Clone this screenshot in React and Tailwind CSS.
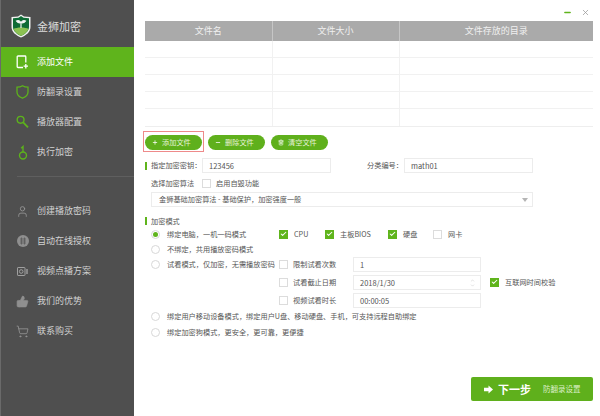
import React from "react";
import { User, ThumbsUp, ShoppingCart, Plus, Minus, Trash2, X, Check, ChevronDown } from "lucide-react";

const FONT = { fontFamily: '"Noto Sans CJK SC", "Noto Sans", sans-serif' };

function Logo() {
  return (
    <svg width="20" height="24" viewBox="0 0 20 24">
      <path d="M10 0.5 L13 2.5 L19.5 3 V13 C19.5 18 15 21.5 10 23.5 C5 21.5 0.5 18 0.5 13 V3 L7 2.5 Z" fill="#f2f2f2" />
      <path d="M10 2 L12.5 3.8 L18 4.2 V13 C18 17 14 20.3 10 22 C6 20.3 2 17 2 13 V4.2 L7.5 3.8 Z" fill="#0f6b35" />
      <path d="M2.3 15 C6 13 14 13 17.7 15 C16 18.5 13 20.6 10 22 C7 20.6 4 18.5 2.3 15 Z" fill="#8cc152" />
      <path d="M10 14 V8.5 M10 8.5 C8.5 6.5 6.5 6.5 5.5 7 C6.5 8.8 8.5 9 10 8.5 Z M10 8.5 C11.5 6.5 13.5 6.5 14.5 7 C13.5 8.8 11.5 9 10 8.5 Z" stroke="#f4f4f4" strokeWidth="1.2" fill="#f4f4f4" />
    </svg>
  );
}

const icons = {
  file: (
    <svg width="14" height="14" viewBox="0 0 14 14" fill="none" stroke="#fff" strokeWidth="1.3">
      <path d="M7 12.5 H2 A0.8 0.8 0 0 1 1.2 11.7 V1.8 A0.8 0.8 0 0 1 2 1 H9 A0.8 0.8 0 0 1 9.8 1.8 V7.5" />
      <path d="M9.8 9 V13.4 M7.6 11.2 H12" />
    </svg>
  ),
  shield: (
    <svg width="13" height="14" viewBox="0 0 13 14" fill="none" stroke="#5db21c" strokeWidth="1.3">
      <path d="M1 2.2 C3 2.2 5 1.8 6.5 0.8 C8 1.8 10 2.2 12 2.2 V7 C12 10 9.5 12 6.5 13.2 C3.5 12 1 10 1 7 Z" />
    </svg>
  ),
  search: (
    <svg width="13" height="14" viewBox="0 0 13 14" fill="none" stroke="#5db21c" strokeWidth="1.4">
      <circle cx="4.6" cy="4.8" r="3.4" />
      <path d="M7.2 7.4 L12 12.4" strokeWidth="1.8" />
    </svg>
  ),
  key: (
    <svg width="10" height="15" viewBox="0 0 10 15" fill="none" stroke="#5db21c" strokeWidth="1.4">
      <circle cx="5" cy="10.5" r="3.5" />
      <path d="M5 7 V1.5 L3.2 3.2" />
    </svg>
  ),
  globe: (
    <svg width="12" height="12" viewBox="0 0 12 12">
      <circle cx="6" cy="6" r="6" fill="#8f8f8f" />
      <path d="M3 4 H9 M3 6 H9 M3 8 H9 M4.5 2.5 V9.5 M7.5 2.5 V9.5" stroke="#555" strokeWidth="0.7" fill="none" />
    </svg>
  ),
  camera: (
    <svg width="11" height="9" viewBox="0 0 11 9" fill="none" stroke="#a0a0a0" strokeWidth="1">
      <rect x="0.5" y="0.5" width="7.5" height="8" rx="0.6" />
      <circle cx="4.2" cy="4.5" r="1.8" />
      <path d="M10 2 V7" strokeWidth="1.4" />
    </svg>
  ),
};

const topNav = [
  { label: "添加文件", icon: icons.file, active: true },
  { label: "防翻录设置", icon: icons.shield },
  { label: "播放器配置", icon: icons.search },
  { label: "执行加密", icon: icons.key },
];

const bottomNav = [
  { label: "创建播放密码", icon: <User size={13} color="#9a9a9a" strokeWidth={1.5} /> },
  { label: "自动在线授权", icon: icons.globe },
  { label: "视频点播方案", icon: icons.camera },
  { label: "我们的优势", icon: <ThumbsUp size={13} color="#8f8f8f" fill="#8f8f8f" strokeWidth={1.2} /> },
  { label: "联系购买", icon: <ShoppingCart size={13} color="#9a9a9a" strokeWidth={1.4} /> },
];

function NavItem({ label, icon, active }) {
  return (
    <div className={`flex h-[30px] items-center text-[9px] ${active ? "bg-[#5fb41c] text-white" : "text-[#d2d2d2]"}`}>
      <div className="flex w-[36px] shrink-0 justify-center pl-[7px]">{icon}</div>
      <span>{label}</span>
    </div>
  );
}

function Radio({ on }) {
  return (
    <span className="flex h-[9px] w-[9px] shrink-0 items-center justify-center rounded-full border border-[#d8d8d8] bg-white">
      {on && <span className="h-[5px] w-[5px] rounded-full bg-[#5fb41c]" />}
    </span>
  );
}

function Box({ on }) {
  return (
    <span className={`flex h-[9px] w-[9px] shrink-0 items-center justify-center border ${on ? "border-[#5fb41c] bg-[#5fb41c]" : "border-[#dcdcdc] bg-white"}`}>
      {on && <Check size={8} color="#fff" strokeWidth={3.5} />}
    </span>
  );
}

function Field({ className, children }) {
  return (
    <div className={`flex h-[15px] items-center border border-[#ececec] bg-white pl-[6px] text-[7.5px] text-[#555] ${className}`}>
      {children}
    </div>
  );
}

function PillButton({ icon, label }) {
  return (
    <div className="flex h-[15px] w-[57px] items-center rounded-full bg-[#5fb01c] pl-[7px] text-[7.2px] text-[#e6f3d8]">
      <span className="mr-[4px] flex w-[6px] justify-center">{icon}</span>
      {label}
    </div>
  );
}

function Opt({ on, label, className }) {
  return (
    <div className={`flex items-center ${className}`}>
      <Box on={on} />
      <span className="ml-[6px]">{label}</span>
    </div>
  );
}

function RadioRow({ on, label, className = "" }) {
  return (
    <div className={`flex h-[15px] items-center pl-[6px] ${className}`}>
      <Radio on={on} />
      <span className="ml-[7px] whitespace-nowrap">{label}</span>
    </div>
  );
}

function SubRow({ label, value, extra, spinner }) {
  return (
    <div className="flex h-[15px] items-center">
      <Box />
      <span className="ml-[5px] w-[60px]">{label}</span>
      <Field className="w-[128px] justify-between pr-[5px]">
        <span>{value}</span>
        {spinner && (
          <span className="flex flex-col items-center text-[#bbb]">
            <ChevronDown size={5} className="rotate-180" />
            <ChevronDown size={5} />
          </span>
        )}
      </Field>
      {extra && (
        <div className="ml-[9px] flex items-center whitespace-nowrap">
          <Box on />
          <span className="ml-[6px]">{extra}</span>
        </div>
      )}
    </div>
  );
}

export default function App() {
  return (
    <div className="flex h-[416px] w-[600px] overflow-hidden bg-white text-[7.2px] text-[#555]" style={FONT}>
      <aside className="flex w-[134px] shrink-0 flex-col border-l border-[#6a6a6a] bg-[#4f4f4f]">
        <div className="flex h-[47px] items-center pt-[5px] pl-[10px]">
          <Logo />
          <span className="ml-[6px] text-[11px] text-[#dcdcdc]">金狮加密</span>
        </div>
        {topNav.map((n) => (
          <NavItem key={n.label} {...n} />
        ))}
        <div className="mt-[9px] ml-[16px] h-px bg-[#5f5f5f]" />
        <div className="mt-[19px]">
          {bottomNav.map((n) => (
            <NavItem key={n.label} {...n} />
          ))}
        </div>
      </aside>

      <main className="flex min-w-0 flex-1 flex-col pl-[11px] pr-[7px]">
        <div className="flex h-[21px] items-start justify-end gap-[9px] pt-[8px] pr-[3px]">
          <Minus size={9} color="#5fb41c" strokeWidth={4} />
          <X size={9} color="#9a9a9a" strokeWidth={2} />
        </div>

        <div className="grid grid-cols-[127.5px_127px_1fr] border-b border-[#eeeeee]">
          {["文件名", "文件大小", "文件存放的目录"].map((h, i) => (
            <div key={h} className={`flex h-[20px] items-center justify-center bg-[#aaaaaa] text-[9px] text-[#f0f0f0] ${i < 2 ? "border-r border-[#c6c6c6]" : ""}`}>
              {h}
            </div>
          ))}
          {Array.from({ length: 15 }).map((_, i) => (
            <div key={i} className={`h-[17px] border-[#f1f1f1] ${i < 12 ? "border-b" : ""} ${i % 3 < 2 ? "border-r" : ""}`} />
          ))}
        </div>

        <div className="mt-[8px] flex items-start gap-[6px]">
          <div className="-mx-[2px] -mt-[4px] -mb-[2px] bg-[#ee8a8a] p-px">
            <div className="bg-white px-[1px] pt-[3px] pb-[1px]">
              <PillButton label="添加文件" icon={<Plus size={7} color="#fff" strokeWidth={3} />} />
            </div>
          </div>
          <PillButton label="删除文件" icon={<Minus size={7} color="#fff" strokeWidth={3} />} />
          <PillButton label="清空文件" icon={<Trash2 size={7} color="#fff" strokeWidth={2.5} />} />
        </div>

        <div className="mt-[8px] flex items-center">
          <span className="h-[8px] w-[2px] bg-[#5fb41c]" />
          <span className="ml-[4px] w-[51px] whitespace-nowrap">指定加密密钥：</span>
          <Field className="w-[129px]">123456</Field>
          <span className="ml-[36px] w-[37px] whitespace-nowrap">分类编号：</span>
          <Field className="w-[129px]">math01</Field>
        </div>

        <div className="mt-[2px] flex h-[17px] items-center pl-[6px]">
          <span className="w-[51px]">选择加密算法</span>
          <Box />
          <span className="ml-[5px]">启用自毁功能</span>
        </div>

        <div className="ml-[6px] flex h-[15px] w-[382px] items-center justify-between border border-[#ececec] pr-[4px] pl-[7px]">
          <span>金狮基础加密算法 - 基础保护，加密强度一般</span>
          <span className="h-0 w-0 border-x-[3px] border-t-[4px] border-x-transparent border-t-[#b5b5b5]" />
        </div>

        <div className="mt-[9px] flex h-[10px] items-center">
          <span className="h-[8px] w-[2px] bg-[#5fb41c]" />
          <span className="ml-[4px]">加密模式</span>
        </div>

        <div className="mt-[1px] flex h-[15px] items-center">
          <RadioRow on label="绑定电脑，一机一码模式" className="w-[134px]" />
          <Opt on label="CPU" className="w-[46px]" />
          <Opt on label="主板BIOS" className="w-[63px]" />
          <Opt on label="硬盘" className="w-[45px]" />
          <Opt label="网卡" />
        </div>
        <RadioRow label="不绑定，共用播放密码模式" />
        <div className="flex">
          <RadioRow label="试看模式，仅加密，无需播放密码" className="w-[134px]" />
          <div className="flex flex-col gap-[3px]">
            <SubRow label="限制试看次数" value="1" />
            <SubRow label="试看截止日期" value="2018/1/30" spinner extra="互联网时间校验" />
            <SubRow label="视频试看时长" value="00:00:05" />
          </div>
        </div>
        <RadioRow label="绑定用户移动设备模式，绑定用户U盘、移动硬盘、手机，可支持远程自助绑定" className="mt-px" />
        <RadioRow label="绑定加密狗模式，更安全，更可靠，更便捷" className="mt-px" />

        <div className="mt-[37px] flex justify-end">
          <div className="flex h-[24px] w-[122px] items-center rounded-[2px] bg-[#5fb01c] pl-[13px] text-white">
            <svg width="9" height="9" viewBox="0 0 9 9" fill="#fff">
              <path d="M0 2.8 H4.5 V0.5 L9 4.5 L4.5 8.5 V6.2 H0 Z" />
            </svg>
            <span className="ml-[5px] text-[11px] font-bold">下一步</span>
            <span className="ml-[12px] text-[7.5px] text-[#dcefc8]">防翻录设置</span>
          </div>
        </div>
      </main>
    </div>
  );
}
